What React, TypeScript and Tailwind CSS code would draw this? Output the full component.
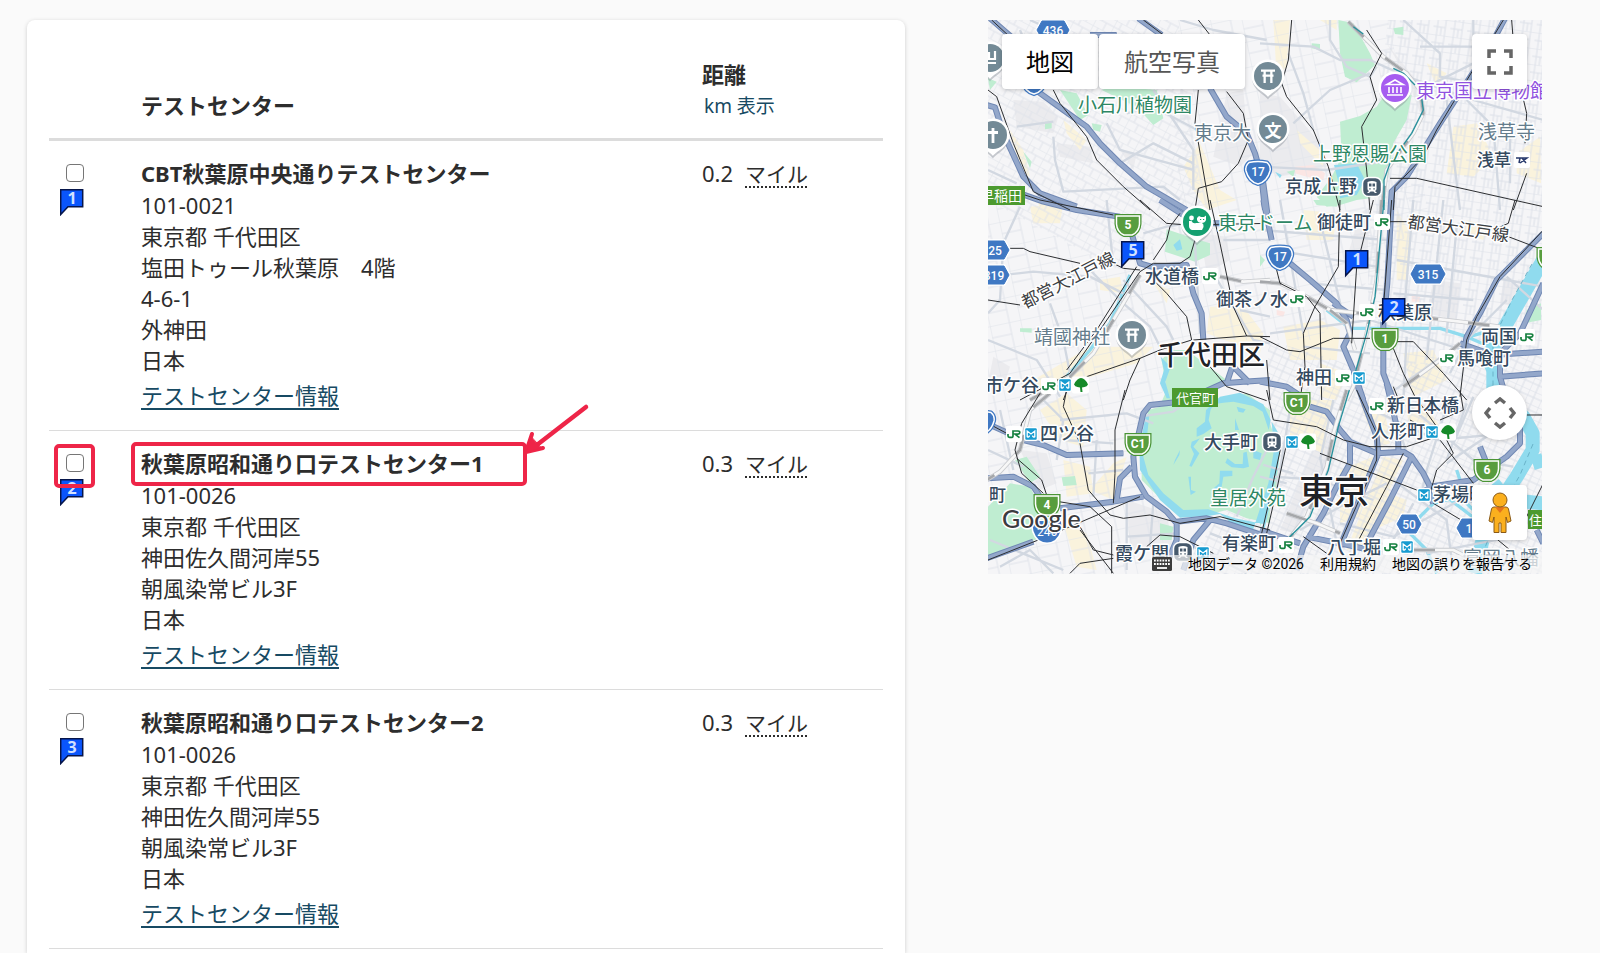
import React from "react";

type Center = { id: number; name: string; lines: string[]; distance: string; marked?: boolean };

const centers: Center[] = [
  {
    id: 1,
    name: "CBT秋葉原中央通りテストセンター",
    lines: ["101-0021", "東京都 千代田区", "塩田トゥール秋葉原　4階", "4-6-1", "外神田", "日本"],
    distance: "0.2",
  },
  {
    id: 2,
    name: "秋葉原昭和通り口テストセンター1",
    lines: ["101-0026", "東京都 千代田区", "神田佐久間河岸55", "朝風染常ビル3F", "日本"],
    distance: "0.3",
    marked: true,
  },
  {
    id: 3,
    name: "秋葉原昭和通り口テストセンター2",
    lines: ["101-0026", "東京都 千代田区", "神田佐久間河岸55", "朝風染常ビル3F", "日本"],
    distance: "0.3",
  },
];

function FlagShape({ n }: { n: number }) {
  return (
    <g>
      <path d="M.7 .7H22.700V17.700H8L.7 25.500Z" fill="#0a55fb" stroke="#06154a" strokeWidth="1.500" />
      <text x="12" y="15" textAnchor="middle" fontSize="16" fontWeight="700" fill="#d3e2ff" fontFamily="'Noto Sans', sans-serif">
        {n}
      </text>
    </g>
  );
}

function Flag({ n }: { n: number }) {
  return (
    <svg className="h-[27px] w-6" viewBox="0 0 24 27" aria-hidden="true">
      <FlagShape n={n} />
    </svg>
  );
}

/* ---------- Map data: tiles drawn at three times the map scale ---------- */

type Tile = "A" | "B" | "C" | "D" | "E" | "F" | "G";
const tiles: Record<Tile, string> = {
  A: "translate(-8 -10) scale(.33333)",
  B: "translate(272 -10) scale(.33333)",
  C: "translate(-8 180) scale(.33333)",
  D: "translate(272 180) scale(.33333)",
  E: "translate(-8 370) scale(.33333)",
  F: "translate(272 370) scale(.33333)",
  G: "translate(132 330) scale(.33333)",
};
type Layer = Partial<Record<Tile, string>>;

const builtUp: Layer = {
  A: "M100 270L190 275L235 320L220 370L110 350ZM600 240L640 250L630 330L600 330ZM230 400L330 410L340 460L240 440ZM740 250L790 240L800 360L830 420L780 470L700 440ZM420 420L470 430L460 480Z",
  B: "M0 250L60 260L130 340L180 400L200 470L60 500L0 470ZM380 100L460 200L510 250L480 310L440 200Z",
  C: "M660 100L740 110L750 180L680 220ZM40 470L90 500L70 560L24 550Z",
  D: "M300 40L330 20L320 210L250 210ZM520 240L600 250L590 360L500 340ZM730 240L800 260L760 320L720 310Z",
  E: "M120 180L200 190L230 280L180 300ZM440 330L560 370L580 480L450 480Z",
  F: "M180 130L240 150L190 330L150 330L110 430L60 420Z",
};
const hospital: Layer = {
  B: "M105 470L160 465L195 490L190 510L140 500L105 490Z",
  D: "M455 285L480 290L478 305L455 305ZM50 330L75 335L70 350L50 345Z",
};
const commerce: Layer = {
  A: "M610 470L660 400L690 470L720 540L770 570L680 600L640 540ZM250 330L320 390L300 420L260 370ZM90 360L130 420L150 500L120 480ZM170 560L260 590L180 600Z",
  B: "M40 30L90 30L80 170L50 200ZM110 360L190 430L190 470L120 400ZM580 350L650 340L700 440L640 500L560 490ZM770 430L840 380L843 520L770 490ZM500 160L560 190L530 230ZM180 30L230 30L230 60Z",
  C: "M150 20L250 10L240 70L160 70ZM160 540L330 440L520 440L470 490L300 540L200 590ZM360 240L420 230L430 280L360 270ZM690 320L790 320L850 400L840 460L680 400ZM520 250L570 270L560 310Z",
  D: "M130 30L230 40L220 120L140 120ZM70 380L180 360L240 390L230 480L90 480ZM410 30L450 100L440 240L410 240ZM430 460L520 450L560 540L460 590ZM180 490L260 520L230 600L180 590ZM620 60L690 80L670 120L610 100Z",
  E: "M180 60L260 10L320 60L310 170L240 150ZM250 210L330 230L340 310L260 320ZM330 300L400 220L440 200L400 330ZM250 400L320 430L350 540L290 530Z",
  F: "M90 30L220 30L190 190L90 150ZM240 240L340 200L300 380L240 400ZM370 200L430 210L310 470L260 480ZM300 40L330 120L360 170L390 160L370 30ZM430 30L500 50L540 110L450 110ZM360 300L440 330L430 380L340 420Z",
};
const greens: Layer = {
  A: "M240 240L290 250L325 315L300 330ZM365 240L400 228L530 240L550 325L520 345L470 290ZM195 335L215 335L215 355L195 358ZM130 425L155 455L150 475ZM335 340L365 345L360 365L340 360ZM24 205L50 215L30 240Z",
  B: "M235 30L280 40L330 130L345 165L290 217L255 200L240 130ZM240 335L300 318L350 290L370 260L455 255L440 330L400 400L385 500L330 565L290 570L240 585L200 590L170 560L215 500L245 440ZM155 100L180 102L180 120L155 115ZM400 55L430 50L430 75L405 72ZM80 485L105 480L100 500Z",
  C: "M560 88L640 115L690 130L690 165L645 185L555 155ZM545 480L570 450L620 450L740 540L700 560L640 605L545 605L560 570ZM120 385L155 385L155 398L120 395ZM465 365L490 370L490 395L465 390Z",
  D: "M160 0L240 0L230 20L170 15ZM800 330L843 310L843 360L790 370ZM0 165L15 180L0 200Z",
  E: "M24 350L90 280L150 290L175 340L240 370L200 430L165 450L24 505ZM505 60L560 45L700 40L800 10L840 40L870 60L870 400L800 385L740 360L680 375L600 375L545 330L485 270L485 170ZM245 262L285 258L290 285L250 288ZM540 400L580 410L575 450L540 450ZM105 210L140 200L180 260L150 280Z",
  F: "M0 60L25 85L40 130L60 180L45 330L0 410Z",
};
const waters: Layer = {
  B: "M222 465L290 460L315 510L290 555L240 565L235 515ZM45 485L65 495L60 505Z",
  C: "M580 135L600 118L607 148L590 152Z",
  G: "M78 195L58 290L60 360L120 450L180 503L270 497L300 492L350 532L420 555L430 522L345 505L265 478L190 480L130 430L85 375L70 320L82 250L88 195ZM300 140L360 128L430 163L452 210L446 240L428 185L400 168L340 155L310 158L285 162L272 178L266 210L275 235L250 252L230 260L230 235L255 215L258 180ZM165 330L180 300L178 315L160 345ZM215 275L240 265L220 290L238 310L215 350L208 348L222 312L212 290ZM205 380L213 380L213 420L228 425L212 435ZM350 170L377 178L370 188L355 185ZM345 205L357 240L345 240ZM380 305L387 350L370 355L335 352L316 338L322 325L345 342L368 342L370 308ZM300 362L337 362L337 378L310 380L305 410L280 432L275 420L298 400ZM400 300L425 310L420 330L400 325ZM455 215L482 260L474 350L430 555L395 552L445 400L462 300ZM122 20L132 60L120 100L140 145L150 145L136 95L152 50Z",
};
const rivers: Layer = {
  D: "M855 170L760 335L700 440L700 600",
  F: "M700 0L790 80L818 130L818 180L770 260L710 350L670 440L645 550M818 220L850 210M740 330L850 340M740 330L700 280",
};
const streams: Layer = {
  C: "M450 225L390 370L330 450L260 530",
  D: "M200 330L270 385L540 385L620 410L690 440M660 470L700 540M610 415L680 395",
  F: "M470 390L520 340L600 320L660 380M520 290L650 390M450 430L500 480L530 550M590 240L610 300",
};
const streets: Layer = {
  A: "M24 110L190 130M120 60L170 180M150 30L260 80M520 240L640 420L640 540M220 380L225 450L250 545L550 530L600 570M110 350L220 335M380 340L420 420L640 480M440 310L520 290L690 380M24 480L110 520M600 30L700 60L860 90M420 460L520 400L640 460M560 75L640 200",
  B: "M0 100L160 110L240 150L330 150L440 200L640 270L850 330M210 30L210 90L260 170L330 200L350 170M100 340L210 240L330 190M160 360L130 250L85 130M430 30L540 130L540 200L700 230M480 240L640 160L640 30M620 270L700 350L720 600M560 270L600 600M640 110L480 110M750 330L750 520M0 470L200 480L400 450",
  C: "M24 230L160 215L330 230L430 280M120 20L70 130L60 300L24 340M210 310L250 420L270 520M380 0L400 200M430 240L560 380L580 420M24 420L170 480L240 590M490 100L560 80L620 70M730 120L870 120M700 220L820 420L870 430M330 210L430 310L510 380L540 440M640 40L660 400M780 330L870 350",
  D: "M0 90L380 120M40 150L350 200M60 0L130 400M180 60L260 390M410 180L850 260M460 0L430 370M550 0L500 480M590 80L560 400M400 280L640 300M150 250L380 270M30 400L330 360L700 480M130 440L330 460M600 430L390 580M440 410L430 600M740 230L850 330M570 520L620 420L740 300",
  E: "M60 60L100 240M24 180L130 230M190 30L250 90L230 210M240 90L440 70L520 100M250 150L400 160M325 250L430 240M440 330L440 540M520 340L510 470M30 450L250 540M60 530L150 480L220 550M440 440L590 430M640 470L800 550M690 430L850 490M350 150L340 320",
  F: "M40 260L180 270L340 330M100 0L50 300M220 30L180 210M340 60L530 150L740 130M450 50L640 210L760 230M560 50L500 240L480 330M620 40L560 210M390 30L440 190M180 200L230 460M240 400L400 440L600 330L740 350M560 220L740 100M400 270L560 390L580 550M640 20L580 160M120 420L240 350L380 280M500 490L760 440M460 340L350 540",
  G: "M440 300L400 380L350 500M60 200L160 185L180 170M430 345L520 370M420 380L500 400",
};
const highways: Layer = {
  A: "M30 25L105 90M100 180L160 235L250 300L320 350L360 400L420 460L500 530L620 600M20 285L45 292L70 370L130 500L180 550L290 590M475 25L545 75M690 235L740 320L800 370L825 430L850 520L862 610M330 75L410 75",
  B: "M735 25L690 110L540 340L490 420L440 500L395 545L390 620M0 460L15 600",
  C: "M120 -20L190 5L290 30L420 50M455 100L480 190L515 200L620 195L640 280L665 340L670 420M540 0L610 45L700 70L760 70M870 540L790 545L730 550L640 590M760 490L740 550M760 500L810 550",
  D: "M10 0L35 120M90 190L150 240L230 310L260 360L270 400L250 440L280 510L310 600M395 0L382 250L370 370L370 520L400 600M850 100L710 240L660 340L620 410L605 490M600 430L700 465L850 455M850 250L780 400L720 460L720 530L850 520M720 530L740 600M0 545L80 560L140 600M220 310L280 350",
  E: "M20 100L130 150L190 165L260 195L430 190M600 35L510 45L490 70L460 200L465 260L500 320L560 365L590 400L590 450L565 510M240 355L400 335L490 320M455 230L420 265L410 330M590 395L680 385L740 400L860 440M690 390L640 450L610 540M20 265L100 260L160 290L180 320M20 505L160 455",
  F: "M150 50L200 65L240 120L270 155L350 190L430 185L455 200L490 250L510 290L640 270L740 200L780 160L780 110M290 -20L350 140L355 190L240 470M380 -20L415 130L415 190M455 200L390 330L310 480M270 160L270 220L230 290L190 370L130 470L110 540M140 440L240 460L330 480M0 420L120 460M660 170L680 220M830 420L850 460M500 290L520 340",
};
const rails: Layer = {
  B: "M265 35L370 140L440 190L480 240L490 310L460 370L380 480L365 600",
  C: "M480 225L430 310L340 460L270 530L150 600M720 230L790 245L870 240",
  D: "M365 0L350 240L320 400L280 560L260 600M0 245L60 250L140 290L210 330L300 340M470 350L600 365L720 380M600 430L540 480L430 560M210 330L260 370L285 450",
  E: "M210 10L150 60L120 180L60 245L20 270",
  F: "M260 0L220 130L200 230L140 380L60 480M80 370L170 400L240 430M460 480L580 480L640 510",
};
const subways: Layer = {
  A: "M35 30L105 95M24 240L50 260L100 400L160 545L270 600M220 240L240 280L320 380L350 450L430 530L510 600M655 30L690 75M490 30L550 75M740 245L790 310L805 390L775 460L725 515L655 535L645 600M655 240L645 340L690 600",
  B: "M95 30L85 150L65 220L80 260L160 360L205 470L240 600M320 60L365 130L330 200L350 270L305 350L320 480L330 600M390 505L470 505L850 590M755 30L765 160L800 310L795 400M800 490L760 600M730 30L530 360L490 440L405 530L400 600",
  C: "M120 -20L180 0L400 45M90 145L130 145L150 155L300 190M390 185L430 205L480 210M24 300L120 315M480 0L560 70L620 75L870 70M645 120L630 170L600 190L520 190L480 215L360 390L270 520L120 600M470 200L350 390L260 510M500 220L560 280L620 350L635 420L540 450L480 475L320 530M640 420L800 408L870 410M690 0L720 130L760 320L800 408M600 40L570 80L560 120L520 180M480 475L450 540L430 600M265 560L250 600M690 500L740 560L860 602",
  D: "M240 0L235 200L165 320L130 400L135 500L120 600M340 0L290 200L275 430M390 65L440 65M765 0L745 70L700 90M745 110L850 150M850 90L720 230L650 350L620 420L600 590M0 410L80 450L120 455L220 415L330 415M410 425L460 425L550 520L620 600M400 445L430 520L470 600M50 210L60 250L140 290L180 340L185 600M395 0L372 300M20 480L30 600",
  E: "M180 10L125 100L105 180L125 250L190 310M110 205L185 270L205 330L330 350L395 410L395 550M260 0L250 50L300 160L325 300L390 375L430 385L510 375L600 400L720 380L870 420M435 0L405 120L405 250L400 340M300 410L340 480L400 495M300 420L400 550M270 550L300 520L400 505M500 470L540 435L600 440L700 490M24 510L200 440L480 320M24 100L80 130",
  F: "M20 0L40 90L170 110L250 150L330 170L440 170L560 130M180 190L470 300M520 340L620 400M690 430L750 480M290 0L350 130L350 210L240 460M430 190L380 290L280 480M450 90L560 150L580 190L530 240L510 310M540 150L640 280M800 75L850 75M850 280L800 380M80 160L50 300L20 430M65 160L35 300L5 430M130 440L200 490M400 -10L420 40M480 40L530 110M600 0L610 60L540 90",
};
const teal: Layer = {
  B: "M280 50L310 72M400 175L430 190L465 225M480 230L490 300L455 370L390 460L372 510L372 600",
  D: "M372 0L345 290L320 400L285 520",
  F: "M268 0L235 110L205 240L150 380L80 450",
};

function Paths({ layer, ...rest }: { layer: Layer } & React.SVGProps<SVGGElement>) {
  return (
    <g strokeLinejoin="round" {...rest}>
      {(Object.keys(layer) as Tile[]).map((t) => (
        <path key={t} d={layer[t]} transform={tiles[t]} />
      ))}
    </g>
  );
}

const GREEN = "#2d8764";
const SLATE = "#647c8c";
const NAVY = "#34495e";
const PURPLE = "#9152e0";
const INK = "#1f2226";

type Label = [text: string, x: number, y: number, size: number, color: string, rotate?: number];
const labels: Label[] = [
  ["小石川植物園", 90, 83, 19, GREEN],
  ["東京大", 206, 111, 19, SLATE],
  ["東京国立博物館", 428, 69, 19, PURPLE],
  ["上野恩賜公園", 325, 132, 19, GREEN],
  ["京成上野", 297, 165, 18, NAVY],
  ["浅草寺", 490, 110, 19, SLATE],
  ["浅草", 489, 138, 17, NAVY],
  ["東京ドーム", 230, 201, 19, GREEN],
  ["御徒町", 329, 201, 18, NAVY],
  ["都営大江戸線", 34, 282, 17, "#3c4043", -27],
  ["都営大江戸線", 420, 200, 17, "#3c4043", 8],
  ["水道橋", 157, 255, 18, NAVY],
  ["御茶ノ水", 228, 278, 18, NAVY],
  ["靖國神社", 46, 315, 19, SLATE],
  ["千代田区", 169, 333, 27, INK],
  ["市ケ谷", -3, 364, 18, NAVY],
  ["秋葉原", 390, 291, 18, NAVY],
  ["両国", 493, 315, 18, NAVY],
  ["馬喰町", 469, 337, 18, NAVY],
  ["神田", 308, 356, 18, NAVY],
  ["四ツ谷", 52, 412, 18, NAVY],
  ["町", 1, 473, 17, NAVY],
  ["大手町", 216, 421, 18, NAVY],
  ["皇居外苑", 222, 476, 19, GREEN],
  ["有楽町", 234, 522, 18, NAVY],
  ["霞ケ関", 127, 532, 18, NAVY],
  ["新日本橋", 399, 384, 18, NAVY],
  ["人形町", 383, 410, 18, NAVY],
  ["茅場町", 445, 473, 18, NAVY],
  ["八丁堀", 339, 526, 18, NAVY],
  ["富岡八幡", 475, 536, 19, SLATE],
  ["東京", 311, 468, 35, INK],
];

const jr = [[394, 202], [222, 256], [309, 279], [61, 366], [379, 292], [539, 317], [459, 338], [355, 358], [26, 414], [298, 525], [389, 386], [403, 527]];
const metro = [[77, 365], [371, 358], [43, 414], [304, 422], [215, 533], [444, 412], [436, 475], [419, 527]];
const leaf = [[93, 365], [320, 422], [460, 412]];
const train = [[384, 167], [284, 422], [195, 532]];
const greenShields: [string, number, number][] = [["5", 140, 205], ["1", 397, 319], ["C1", 150, 424], ["C1", 309, 383], ["4", 59, 485], ["6", 499, 450], ["", 562, 238]];
const hexShields: [string, number, number, number][] = [["436", 65, 10, 16], ["315", 440, 254, 17], ["25", 7, 230, 14], ["319", 6, 255, 15], ["50", 421, 504, 12], ["1", 481, 508, 12]];
const blueShields: [string, number, number][] = [["17", 270, 152], ["17", 292, 237], ["", 46, 62], ["", -6, 402]];

function Pin({ x, y, color, children }: { x: number; y: number; color: string; children: React.ReactNode }) {
  return (
    <g transform={`translate(${x} ${y})`}>
      <path d="M0 22C-3 17-16 13-16 0A16 16 0 1 1 16 0C16 13 3 17 0 22Z" fill="#7f8890" opacity=".4" transform="translate(0 1.5)" />
      <path d="M0 21C-3 16-16.500 12-16.500 0A16.500 16.500 0 1 1 16.500 0C16.500 12 3 16 0 21Z" fill="#fff" />
      <circle r="14" fill={color} />
      {children}
    </g>
  );
}

const Torii = () => <path d="M-7-6.500H7V-4.200H4.500V-1.500H5.500V.8H4.500V7H2.200V.8H-2.200V7H-4.500V.8H-5.500V-1.500H-4.500V-4.200H-7ZM-2.200-4.200V-1.500H2.200V-4.200Z" fill="#fff" fillRule="evenodd" />;

function SignBoard({ text, x, y, w, size = 14 }: { text: string; x: number; y: number; w: number; size?: number }) {
  return (
    <g>
      <rect x={x} y={y} width={w} height="19" fill="#4c9a2f" />
      <text x={x + w - 3} y={y + 9} textAnchor="end" dominantBaseline="central" fontSize={size} fill="#fff">{text}</text>
    </g>
  );
}

function MapDrawing() {
  return (
    <svg className="block w-full" viewBox="0 0 554 554" role="img" aria-label="千代田区周辺の地図" fontFamily="'Noto Sans CJK JP', sans-serif">
      <defs>
        <pattern id="mesh-a" width="19" height="15" patternUnits="userSpaceOnUse" patternTransform="rotate(28)">
          <path d="M0 0H19M0 0V15M0 7H19M11 7V15M6 0V7" fill="none" stroke="#e0e3ea" strokeWidth="1" />
        </pattern>
        <pattern id="mesh-b" width="17" height="16" patternUnits="userSpaceOnUse" patternTransform="rotate(8)">
          <path d="M0 0H17M4 0V16M12 0V16M0 8H12M8 8V16" fill="none" stroke="#dce0e8" strokeWidth="1" />
        </pattern>
        <pattern id="mesh-c" width="15" height="13" patternUnits="userSpaceOnUse" patternTransform="rotate(24)">
          <path d="M0 0H15M0 0V13M7 0V13M0 6H15" fill="none" stroke="#dbdfe7" strokeWidth="1" />
        </pattern>
        <pattern id="mesh-d" width="31" height="25" patternUnits="userSpaceOnUse" patternTransform="rotate(-12)">
          <path d="M0 0H31M0 0V25M0 12H20M20 0V25" fill="none" stroke="#e0e3ea" strokeWidth="1" />
        </pattern>
      </defs>
      <rect width="554" height="554" fill="#f5f5f7" />
      <Paths layer={builtUp} fill="#ebebee" />
      <Paths layer={commerce} fill="#faf3dd" />
      <Paths layer={hospital} fill="#fbe6e4" />
      <path d="M0 0H190L215 190L130 250L0 180Z" fill="url(#mesh-a)" />
      <path d="M190 0H400L440 190L330 320H190Z" fill="url(#mesh-d)" />
      <path d="M400 0H554V330L380 350V170Z" fill="url(#mesh-b)" />
      <path d="M280 320L380 350L554 330V554H190L280 430Z" fill="url(#mesh-c)" />
      <path d="M0 180L130 250L215 190L190 320L160 420L190 554H0Z" fill="url(#mesh-d)" />
      <Paths layer={greens} fill="#bfedd1" />
      <Paths layer={waters} fill="#90dbee" />
      <Paths layer={rivers} fill="none" stroke="#90dbee" strokeWidth="42" />
      <Paths layer={streams} fill="none" stroke="#90dbee" strokeWidth="10" />
      <Paths layer={streets} fill="none" stroke="#d2d8e1" strokeWidth="7" />
      <Paths layer={highways} fill="none" stroke="#6f87b3" strokeWidth="18" />
      <Paths layer={highways} fill="none" stroke="#93a7ca" strokeWidth="12" />
      <Paths layer={rails} fill="none" stroke="#c9cbcf" strokeWidth="13" />
      <Paths layer={rails} fill="none" stroke="#f7f7f7" strokeWidth="8" />
      <Paths layer={rails} fill="none" stroke="#a5a7aa" strokeWidth="8" strokeDasharray="65 90" />
      <Paths layer={teal} fill="none" stroke="#27919d" strokeWidth="4" />
      <Paths layer={subways} fill="none" stroke="#2b2d30" strokeWidth="3" />
      <path d="M544 244L524 280L505 320V370M545 424L532 455L512 490L496 530" fill="none" stroke="#6ab3c9" strokeWidth="1" strokeDasharray="5 4" />

      {hexShields.map(([t, x, y, w]) => (
        <g key={t + x} transform={`translate(${x} ${y})`}>
          <path d={`M${-w} 0L${-w + 5} -9H${w - 5}L${w} 0L${w - 5} 9H${-w + 5}Z`} fill="#3f78c3" stroke="#fff" strokeWidth="3.500" />
          <path d={`M${-w} 0L${-w + 5} -9H${w - 5}L${w} 0L${w - 5} 9H${-w + 5}Z`} fill="#3f78c3" stroke="#3f78c3" strokeWidth="1" />
          <text textAnchor="middle" y=".5" dominantBaseline="central" fontSize="12" fill="#fff" fontWeight="500" fontFamily="Roboto, sans-serif">{t}</text>
        </g>
      ))}
      {blueShields.map(([t, x, y]) => (
        <g key={t + x} transform={`translate(${x} ${y})`}>
          <path d="M-9-9.500Q0-11.500 9-9.500Q13-6 12-1Q9 10 0 12Q-9 10-12-1Q-13-6-9-9.500Z" fill="#3f78c3" stroke="#3f78c3" strokeWidth="4" paintOrder="stroke" />
          <path d="M-9-9.500Q0-11.500 9-9.500Q13-6 12-1Q9 10 0 12Q-9 10-12-1Q-13-6-9-9.500Z" fill="#3f78c3" stroke="#fff" strokeWidth="1.500" />
          <text textAnchor="middle" dominantBaseline="central" fontSize="12" fill="#fff" fontWeight="500" fontFamily="Roboto, sans-serif">{t}</text>
        </g>
      ))}
      <g transform="translate(59 508)">
        <path d="M-14-7H14Q16 4 8 12Q0 17-8 12Q-16 4-14-7Z" fill="#3f78c3" stroke="#fff" strokeWidth="3" paintOrder="stroke" />
        <text textAnchor="middle" y="4" dominantBaseline="central" fontSize="12" fill="#fff" fontFamily="Roboto, sans-serif">246</text>
      </g>
      {greenShields.map(([t, x, y]) => (
        <g key={t + x + y} transform={`translate(${x} ${y})`}>
          <path d="M-11.500-9H11.500V-1Q11 7 4 10H-4Q-11 7-11.500-1Z" fill="#589d3e" stroke="#4a9436" strokeWidth="4" />
          <path d="M-11.500-9H11.500V-1Q11 7 4 10H-4Q-11 7-11.500-1Z" fill="#589d3e" stroke="#fff" strokeWidth="1.500" />
          <text textAnchor="middle" dominantBaseline="central" fontSize="12" fill="#fff" fontWeight="700" fontFamily="Roboto, sans-serif">{t}</text>
        </g>
      ))}
      <SignBoard text="早稲田" x={-8} y={166} w={45} />
      <SignBoard text="代官町" x={184} y={368} w={46} size={13} />
      <SignBoard text="住" x={540} y={490} w={17} size={13} />

      <Pin x={2} y={38} color="#738a96"><path d="M-7-6V1H5V-7M-1-6V1M-7 5H6" fill="none" stroke="#fff" strokeWidth="2.200" /></Pin>
      <Pin x={5} y={115} color="#738a96"><path d="M0-7V8M-5-2.500H5" fill="none" stroke="#fff" strokeWidth="2.800" /></Pin>
      <Pin x={280} y={56} color="#738a96"><Torii /></Pin>
      <Pin x={285} y={109} color="#738a96">
        <text textAnchor="middle" y="0" dominantBaseline="central" fontSize="17" fontWeight="700" fill="#fff">文</text>
      </Pin>
      <Pin x={144} y={315} color="#738a96"><Torii /></Pin>
      <Pin x={407} y={68} color="#a65cf0">
        <path d="M-8-3.500L0-8L8-3.500ZM-6-1V5M-2-1V5M2-1V5M6-1V5M-8 7H8" fill="none" stroke="#fff" strokeWidth="1.600" />
      </Pin>
      <Pin x={209} y={202} color="#14a070">
        <path d="M-8-1H-5.500Q-4 2-1 1H5Q7 2 6.500 5L5 8H-5Q-8 7-8 4Z" fill="#fff" />
        <circle cx="-5.500" cy="-4" r="2.400" fill="#fff" />
        <path d="M0-4L2-6L4-5H7L9-6.500V-2Q8 1 4.500 1T0-2Z" fill="#fff" />
        <path d="M3-2.500H4.200M6-2.500H7.200" stroke="#14a070" strokeWidth="1.200" />
      </Pin>

      {labels.map(([t, x, y, size, color, rotate], i) => (
        <text
          key={i}
          x={x}
          y={y}
          dominantBaseline="central"
          fontSize={size}
          fill={color}
          fontWeight={color === INK || color === NAVY ? 500 : 400}
          stroke="#fff"
          strokeWidth="3"
          strokeLinejoin="round"
          paintOrder="stroke"
          transform={rotate ? `rotate(${rotate} ${x} ${y})` : undefined}
        >
          {t}
        </text>
      ))}

      {jr.map(([x, y]) => (
        <g key={`${x}-${y}`} transform={`translate(${x} ${y})`}>
          <rect x="-8" y="-8" width="16" height="16" rx="2" fill="#fff" />
          <path d="M-6 0V2Q-6 3.300-4.500 3.300H-2Q-1 3.300-1 2V-3H4Q5.800-3 5.800-1.500T4 .2H1L5.500 3.700" fill="none" stroke="#15803f" strokeWidth="1.700" />
        </g>
      ))}
      {metro.map(([x, y]) => (
        <g key={`${x}-${y}`} transform={`translate(${x} ${y})`}>
          <rect x="-7" y="-7" width="14" height="14" rx="2" fill="#fff" />
          <rect x="-5.700" y="-5.700" width="11.400" height="11.400" rx="1" fill="#169bd0" />
          <path d="M-3.800 3.200V-3L0 0L3.800-3V3.200M-3.800 3.200Q-1.500 3.200-1.500 1.500M3.800 3.200Q1.500 3.200 1.500 1.500" fill="none" stroke="#fff" strokeWidth="1.300" />
        </g>
      ))}
      {leaf.map(([x, y]) => (
        <g key={`${x}-${y}`} transform={`translate(${x} ${y})`}>
          <rect x="-9" y="-8.500" width="17" height="17" rx="2" fill="#fff" />
          <path d="M-7-.5Q-4-7 0-7T7-.5Q6 1.500 3.500 2L1 2.500L1.500 7H-.5L-1 2.500L-3.500 2Q-6 1.500-7-.5Z" fill="#168a29" />
        </g>
      ))}
      {train.map(([x, y]) => (
        <g key={`${x}-${y}`} transform={`translate(${x} ${y})`}>
          <rect x="-9.500" y="-9.500" width="19" height="19" rx="6" fill="#46596c" stroke="#fff" strokeWidth="1.500" />
          <path d="M-4.500-5Q0-7 4.500-5V2Q4.500 3.500 3 4L5 6H3L1.500 4.500H-1.500L-3 6H-5L-3 4Q-4.500 3.500-4.500 2ZM-3-3.500V-.5H-.5V-3.500ZM.5-3.500V-.5H3V-3.500ZM-2.800 1.200H-1.300V2.600H-2.800ZM1.300 1.200H2.800V2.600H1.300Z" fill="#fff" fillRule="evenodd" />
        </g>
      ))}
      <g transform="translate(534 140)">
        <rect x="-8" y="-8" width="16" height="16" rx="2" fill="#fff" />
        <path d="M-6-2H5L-2 3M-2-2L-3 3M0-2L4 3" fill="none" stroke="#26386b" strokeWidth="1.500" />
      </g>
      <g transform="translate(133 221)"><FlagShape n={5} /></g>
      <g transform="translate(357 230)"><FlagShape n={1} /></g>
      <g transform="translate(394 278)"><FlagShape n={2} /></g>
      <text x="14" y="508" fontSize="25" fill="#3c3c3f" stroke="#fff" strokeWidth="3" paintOrder="stroke" strokeLinejoin="round" fontWeight="500" fontFamily="Lato, sans-serif">
        Google
      </text>
    </svg>
  );
}

const control = "absolute flex items-center justify-center bg-white shadow-[0_1px_4px_rgba(0,0,0,0.2)]";

function MapPanel() {
  return (
    <section aria-label="地図" className="relative overflow-hidden">
      <MapDrawing />
      <div className="absolute top-[14px] left-[14px] flex h-[55px] gap-px text-2xl">
        <button type="button" className="rounded-sm bg-white px-6 text-black shadow-[0_1px_4px_rgba(0,0,0,0.2)]">地図</button>
        <button type="button" className="rounded-sm bg-white px-[25px] text-[#565656] shadow-[0_1px_4px_rgba(0,0,0,0.2)]">航空写真</button>
      </div>
      <button type="button" aria-label="全画面表示" className={`${control} top-[14px] right-[15px] size-[55px] rounded-sm`}>
        <svg viewBox="0 0 26 26" className="size-[26px]" fill="none" stroke="#666" strokeWidth="3.500">
          <path d="M2 9V2H9M17 2H24V9M24 17V24H17M9 24H2V17" />
        </svg>
      </button>
      <button type="button" aria-label="地図のカメラ コントロール" className={`${control} right-[15px] bottom-[134px] size-[55px] rounded-full`}>
        <svg viewBox="0 0 32 32" className="size-8" fill="none" stroke="#666" strokeWidth="3.500">
          <path d="M11 6L16 2L21 6M11 26L16 30L21 26M6 11L2 16L6 21M26 11L30 16L26 21" />
        </svg>
      </button>
      <button type="button" aria-label="ストリートビュー" className={`${control} right-[15px] bottom-[34px] size-[55px] rounded-sm`}>
        <svg viewBox="0 0 24 42" className="h-[42px] w-6" stroke="#8a5a17" strokeWidth="1">
          <path d="M6 15H18Q20 15 20.500 17L23 29L19.500 30.500L18 25V40.500H13V31H11V40.500H6V25L4.500 30.500L1 29L3.500 17Q4 15 6 15Z" fill="#fbb01e" />
          <path d="M7 15H17L12 21Z" fill="#e5741c" stroke="none" />
          <circle cx="12" cy="8" r="7" fill="#fbb01e" />
        </svg>
      </button>
      <div className="absolute right-0 bottom-px flex h-[18px] items-center gap-4 bg-[#f5f5f5]/70 pr-[10px] font-['Roboto','Noto_Sans_CJK_JP',sans-serif] text-sm leading-[18px] whitespace-nowrap text-black">
        <button type="button" aria-label="キーボード ショートカット">
          <svg viewBox="0 0 20 14" className="h-[14px] w-5">
            <rect width="20" height="14" rx="1.500" fill="#3c3c3c" />
            <path d="M2 3.500H18M2 7H18" stroke="#fff" strokeWidth="1.800" strokeDasharray="1.800 1" />
            <path d="M5 11H15" stroke="#fff" strokeWidth="1.800" />
          </svg>
        </button>
        <span>地図データ ©2026</span>
        <a href="#terms">利用規約</a>
        <a href="#report">地図の誤りを報告する</a>
      </div>
    </section>
  );
}

function CenterRow({ center }: { center: Center }) {
  const inputId = `center-${center.id}`;
  return (
    <tr className="border-b border-[#dcdcdc] align-top">
      <td className="pt-[23px] pl-[11px]">
        <div className="relative flex flex-col items-start">
          <input
            id={inputId}
            type="checkbox"
            className="ml-[6px] size-[18px] appearance-none rounded border border-[#767676] bg-white checked:bg-[#0b5cff]"
          />
          <div className="mt-[7px]">
            <Flag n={center.id} />
          </div>
          {center.marked && <span className="absolute -top-[10px] -left-[6px] h-11 w-[41px] rounded-[5px] border-4 border-[#ee2548]" />}
        </div>
      </td>
      <td className="pt-4 pb-[19px]">
        <div className="relative mb-px">
          <label htmlFor={inputId} className="block font-bold">{center.name}</label>
          {center.marked && (
            <>
              <span className="absolute -top-[5px] -left-[10px] h-11 w-[396px] rounded-[5px] border-4 border-[#ee2548]" />
              <svg className="absolute -top-[45px] left-[381px] h-[54px] w-[68px]" viewBox="0 0 68 54" fill="none" stroke="#ee2548" strokeLinecap="round" strokeLinejoin="round" aria-hidden="true">
                <path d="M64 5L11 46" strokeWidth="4.500" />
                <path d="M10 32L4 50L21 46" strokeWidth="4" />
                <path d="M10 36L4 50L19 46Z" fill="#ee2548" strokeWidth="1" />
              </svg>
            </>
          )}
        </div>
        {center.lines.map((line, i) => (
          <div key={i} className="leading-[31px]">{line}</div>
        ))}
        <a href={`#${inputId}`} className="mt-[3px] block w-fit text-[#174a63] underline decoration-2 underline-offset-4">テストセンター情報</a>
      </td>
      <td className="pt-4">
        <span className="mr-3">{center.distance}</span>
        <abbr title="マイル" className="text-[21px] underline decoration-dotted decoration-2 underline-offset-4">マイル</abbr>
      </td>
    </tr>
  );
}

export default function App() {
  return (
    <main
      lang="ja"
      className="grid min-h-screen grid-cols-[minmax(0,878fr)_minmax(0,554fr)] items-start gap-x-[83px] bg-[#fafafa] pt-5 pr-[58px] pl-[27px] font-['Noto_Sans','Noto_Sans_CJK_JP',sans-serif] text-[#2d2d2d]"
    >
      <section className="min-h-[calc(100vh-20px)] rounded-t-lg bg-white px-[22px] pb-1 shadow-[0_1px_4px_rgba(0,0,0,0.18)]">
        <table className="w-full table-fixed border-collapse text-left text-[22px] leading-8">
          <thead>
            <tr className="border-b-[3px] border-[#dcdcdc] align-bottom">
              <th scope="col" className="w-[92px]"><span className="sr-only">選択</span></th>
              <th scope="col" className="pb-[17px] font-bold">テストセンター</th>
              <th scope="col" className="w-[181px] pt-[38px] pb-4 font-bold">
                距離
                <a href="#km" className="block pl-[2px] text-[19px] leading-8 font-normal text-[#174a63]">km 表示</a>
              </th>
            </tr>
          </thead>
          <tbody>
            {centers.map((c) => (
              <CenterRow key={c.id} center={c} />
            ))}
          </tbody>
        </table>
      </section>
      <MapPanel />
    </main>
  );
}
